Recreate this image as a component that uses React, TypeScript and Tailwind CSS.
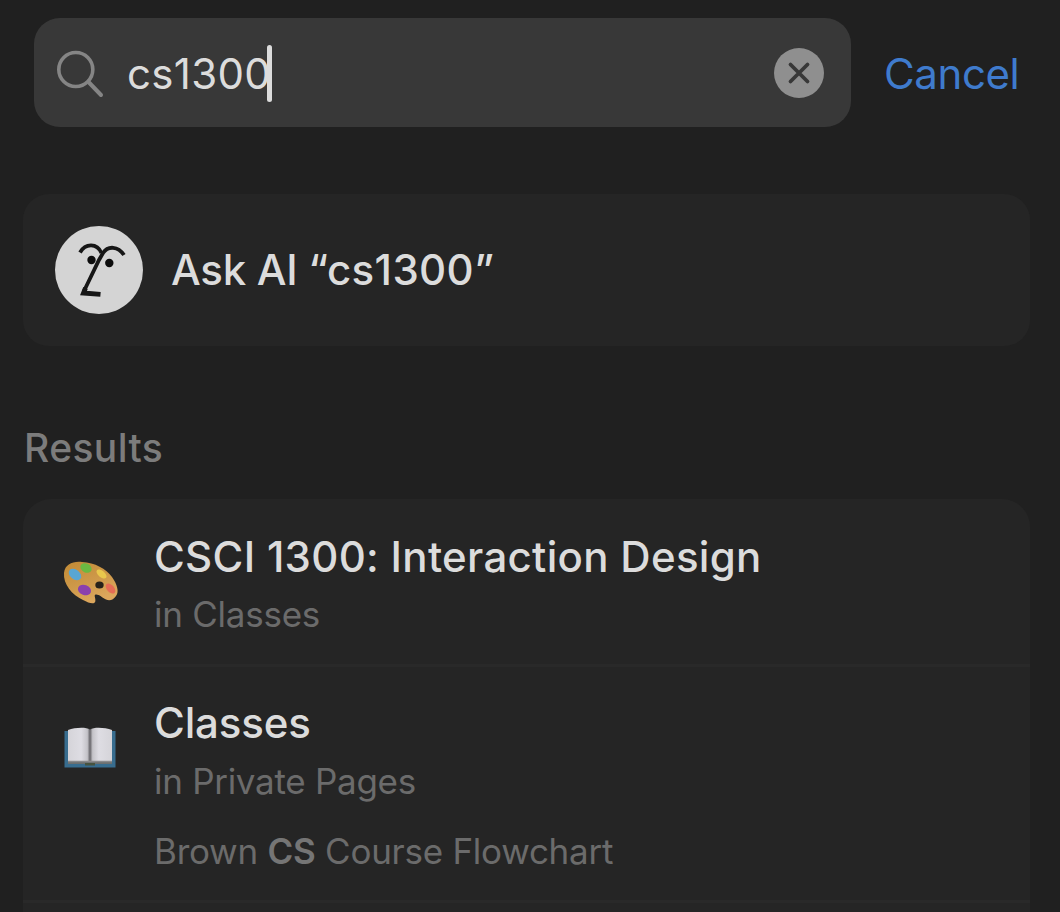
import type { ReactNode } from 'react';

function SearchIcon() {
  return (
    <svg className="h-[50px] w-[50px] shrink-0" viewBox="0 0 50 50" fill="none" stroke="#858585" strokeLinecap="round">
      <circle cx="18.800" cy="21.500" r="17" strokeWidth="3.600" />
      <path d="M31.500 34 44 47" strokeWidth="4" />
    </svg>
  );
}

function ClearIcon() {
  return (
    <svg className="h-[50px] w-[50px] shrink-0" viewBox="0 0 50 50">
      <circle cx="25" cy="25" r="25" fill="#8f8f8f" />
      <path d="M16.5 16.5 33.5 33.5M33.5 16.5 16.5 33.5" stroke="#383838" strokeWidth="3.8" strokeLinecap="round" />
    </svg>
  );
}

function AiFace() {
  return (
    <svg className="h-[88px] w-[88px] shrink-0" viewBox="0 0 88 88" fill="none" stroke="#161616" strokeWidth="3.800">
      <circle cx="44" cy="44" r="44" fill="#d4d4d4" stroke="none" />
      <path d="M25 26.500C30.500 17 42 17 46.500 27" />
      <path d="M69 29C63 20 53 19.500 48 27L44 34 29 65" />
      <path d="M45.500 68.400 28.500 67 30.500 62" strokeWidth="4.800" />
      <circle cx="36.500" cy="34" r="4.200" fill="#0c0c0c" stroke="none" />
      <circle cx="54.300" cy="37" r="4.200" fill="#0c0c0c" stroke="none" />
    </svg>
  );
}

function PaletteIcon() {
  return (
    <svg className="h-[46px] w-[58px]" viewBox="0 0 58 46">
      <defs>
        <linearGradient id="wood" x1="0" y1="0" x2="0.5" y2="1">
          <stop offset="0" stopColor="#c18a35" />
          <stop offset="0.6" stopColor="#cf9a4b" />
          <stop offset="1" stopColor="#dda75d" />
        </linearGradient>
      </defs>
      <path
        d="M2 14C3 5 11 2 20 3c13 .5 24 7 30 15 5 7 7.500 15 4 19-2.500 4-6.500 5-10 3.500-4-2-7-5.500-10.500-5-2 .8.500 3.500-.2 7C32 46 27 44 21 41 10 36 1 25 2 14Z"
        fill="url(#wood)"
      />
      <ellipse cx="37.500" cy="26" rx="4.200" ry="3.500" fill="#28221a" />
      <ellipse cx="13" cy="15.500" rx="7" ry="4.800" transform="rotate(38 13 15.500)" fill="#58a6d2" />
      <ellipse cx="24" cy="9" rx="6" ry="4.400" transform="rotate(28 24 9)" fill="#6bb942" />
      <ellipse cx="39.500" cy="15" rx="6" ry="3.200" transform="rotate(40 39.500 15)" fill="#e9c74c" />
      <ellipse cx="48.500" cy="29.500" rx="6" ry="3.600" transform="rotate(48 48.500 29.500)" fill="#e56c55" />
      <ellipse cx="22.500" cy="31" rx="6.800" ry="5" transform="rotate(20 22.500 31)" fill="#8b40ad" />
    </svg>
  );
}

function BookIcon() {
  return (
    <svg className="ml-[2px] h-[43px] w-[54px]" viewBox="0 0 54 43">
      <defs>
        <linearGradient id="pages" x1="0" y1="0" x2="1" y2="0">
          <stop offset="0" stopColor="#d5d4d9" />
          <stop offset="0.3" stopColor="#dedde3" />
          <stop offset="0.44" stopColor="#c4c3c8" />
          <stop offset="0.5" stopColor="#656468" />
          <stop offset="0.56" stopColor="#c4c3c8" />
          <stop offset="0.7" stopColor="#dedde3" />
          <stop offset="1" stopColor="#d5d4d9" />
        </linearGradient>
      </defs>
      <path d="M.5 4h51v36.500H.5Z" fill="#386d8f" />
      <path d="M4 34.500h44v2.500H4Z" fill="#6a6f70" />
      <path d="M4 3C11 .5 22 0 26 2.500 30 0 41 .5 48 3v31.500c-8 0-17-1-22 .5-5-1.500-14-.5-22-.5Z" fill="url(#pages)" />
      <path d="M4 34.500h44" stroke="#8a8a8c" strokeWidth="1.500" />
      <path d="M21 36h10v2.500H21Z" fill="#46533f" />
    </svg>
  );
}

interface ResultProps {
  icon: ReactNode;
  title: ReactNode;
  location: ReactNode;
  children?: ReactNode;
  className: string;
}

function Result({ icon, title, location, children, className }: ResultProps) {
  return (
    <li className={`flex border-b-3 border-[#292929] ${className}`}>
      <div className="flex h-[92px] w-[131px] shrink-0 items-end pl-[39px]">{icon}</div>
      <div>
        {title}
        {location}
        {children}
      </div>
    </li>
  );
}

export default function App() {
  return (
    <main className="h-[912px] w-full overflow-hidden bg-[#202020] pt-[18px] font-['Inter',sans-serif] text-[#dcdcdc]">
      <header className="flex h-[109px] items-center pl-[34px]">
        <div className="flex h-full w-[817px] items-center rounded-[26px] bg-[#383838] pr-[27px] pl-[23px]">
          <SearchIcon />
          <div className="ml-[20px] flex flex-1 items-center pt-[2px]">
            <span className="text-[42px] leading-[58px] tracking-[0.3px]">cs1300</span>
            <span className="-ml-[4px] h-[57px] w-[5px] rounded-full bg-[#dcdcdc]" />
          </div>
          <button aria-label="Clear">
            <ClearIcon />
          </button>
        </div>
        <button className="ml-[33px] pt-[2px] text-[42px] leading-[58px] tracking-[-0.4px] text-[#3f7bcd]">Cancel</button>
      </header>

      <button className="mt-[67px] ml-[23px] flex h-[152px] w-[1007px] items-center rounded-[26px] bg-[#252525] pl-[32px]">
        <AiFace />
        <span className="ml-[28px] text-[42px] leading-[58px] font-medium">
          <span className="tracking-[-0.3px]">Ask AI </span>
          <span className="tracking-[0.4px]">“cs1300”</span>
        </span>
      </button>

      <h2 className="mt-[77px] ml-[24px] text-[39px] leading-[50px] font-medium tracking-[0.4px] text-[#7c7c7c]">Results</h2>

      <ul className="mt-[26px] ml-[23px] h-[440px] w-[1007px] overflow-hidden rounded-t-[28px] bg-[#252525]">
        <Result
          className="h-[168px] pt-[14px]"
          icon={<PaletteIcon />}
          title={<h3 className="mt-[15px] text-[42px] leading-[58px] font-medium tracking-[0.3px]">CSCI 1300: Interaction Design</h3>}
          location={<p className="mt-[3px] text-[35px] leading-[50px] tracking-[-0.25px] text-[#6b6b6b]">in Classes</p>}
        />
        <Result
          className="h-[236px] pt-[11px]"
          icon={<BookIcon />}
          title={<h3 className="mt-[16px] text-[42px] leading-[58px] font-medium tracking-[-0.15px]">Classes</h3>}
          location={<p className="mt-[4px] text-[35px] leading-[50px] tracking-[-0.28px] text-[#6b6b6b]">in Private Pages</p>}
        >
          <p className="mt-[20px] text-[35px] leading-[50px] tracking-[-0.26px] text-[#6b6b6b]">
            Brown <b className="font-semibold text-[#757575]">CS</b> Course Flowchart
          </p>
        </Result>
      </ul>
    </main>
  );
}
